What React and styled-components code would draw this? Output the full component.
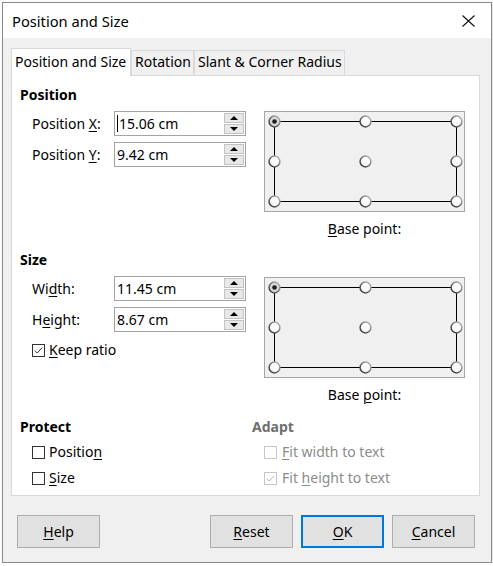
import React, { useId } from "react";
import styled, { createGlobalStyle } from "styled-components";

const Global = createGlobalStyle`
  html, body { margin: 0; padding: 0; background: #ffffff; }
  body {
    font-family: "Noto Sans", "Open Sans", "DejaVu Sans", sans-serif;
    font-size: 14px;
    color: #000;
  }
  u { text-decoration-thickness: 1px; text-underline-offset: 2px; }
`;

const Window = styled.div`
  margin: 2px 0 0 2px;
  width: 490px;
  height: 561px;
  box-sizing: border-box;
  border: 1px solid #8a8a8a;
  background: #f0f0f0;
  display: flex;
  flex-direction: column;
  box-shadow: 1px 1px 3px rgba(0, 0, 0, 0.18);
`;

const TitleBar = styled.div`
  height: 35px;
  background: #ffffff;
  display: flex;
  align-items: center;
  justify-content: space-between;
  padding: 0 16px 0 9px;
  font-size: 14.7px;
`;

const CloseIcon = () => (
  <svg width="13" height="12" viewBox="0 0 13 12">
    <path d="M0.5 0.5 L12.5 11.5 M12.5 0.5 L0.5 11.5" stroke="#111" strokeWidth="1.1" fill="none" />
  </svg>
);

const Body = styled.div`
  flex: 1;
  display: flex;
  flex-direction: column;
  padding: 10px 11px 0 8px;
`;

const TabBar = styled.div`
  display: flex;
  align-items: flex-end;
  height: 28px;
  margin-bottom: -1px;
  position: relative;
  z-index: 1;
`;

const Tab = styled.div`
  box-sizing: border-box;
  width: ${(p) => p.$w}px;
  height: ${(p) => (p.$active ? 28 : 25)}px;
  margin-bottom: ${(p) => (p.$active ? 0 : 1)}px;
  padding: ${(p) => (p.$active ? "3px" : "1px")} 3px 0 3px;
  background: ${(p) => (p.$active ? "#ffffff" : "#f0f0f0")};
  border: 1px solid #d9d9d9;
  border-bottom: none;
  line-height: 20px;
  white-space: nowrap;
`;

const Panel = styled.div`
  box-sizing: border-box;
  height: 421px;
  background: #ffffff;
  border: 1px solid #d9d9d9;
  padding: 9px 10px 0 8px;
  display: flex;
  flex-direction: column;
`;

const Heading = styled.div`
  font-weight: 700;
  height: 20px;
  line-height: 20px;
  margin-top: ${(p) => p.$mt || 0}px;
  color: ${(p) => (p.$disabled ? "#6e6e6e" : "#000")};
`;

const SectionBody = styled.div`
  display: flex;
  margin-top: 6px;
`;

const Fields = styled.div`
  width: 244px;
  box-sizing: border-box;
  padding-left: 12px;
  display: flex;
  flex-direction: column;
  gap: 6px;
`;

const FieldRow = styled.div`
  display: flex;
  align-items: center;
  height: 25px;
`;

const Label = styled.div`
  width: 82px;
  line-height: 20px;
`;

const SpinField = styled.div`
  box-sizing: border-box;
  width: 132px;
  height: 25px;
  border: 1px solid #a3a3a3;
  background: #fff;
  display: flex;
  align-items: stretch;
`;

const Value = styled.div`
  flex: 1;
  display: flex;
  align-items: center;
  padding-left: 2px;
  line-height: 20px;
`;

const Caret = styled.span`
  display: inline-block;
  width: 1px;
  height: 17px;
  background: #000;
  margin-right: 1px;
`;

const SpinCol = styled.div`
  width: 20px;
  display: flex;
  flex-direction: column;
  gap: 1px;
  margin: 1px 1px 1px 0;
`;

const SpinBtn = styled.div`
  flex: 1;
  box-sizing: border-box;
  background: #e8e8e8;
  border: 1px solid #c3c3c3;
  display: flex;
  align-items: center;
  justify-content: center;
`;

const Arrow = styled.span`
  width: 0;
  height: 0;
  border-left: 4px solid transparent;
  border-right: 4px solid transparent;
  ${(p) => (p.$up ? "border-bottom: 4px solid #000;" : "border-top: 4px solid #000;")}
`;

const BasePoint = styled.div`
  display: flex;
  flex-direction: column;
  align-items: center;
  width: 201px;
  margin-top: ${(p) => p.$mt || 0}px;
`;

const PointBox = styled.div`
  box-sizing: border-box;
  width: 201px;
  height: 101px;
  border: 1px solid #a6a6a6;
  background: #f0f0f0;
  display: flex;
`;

const PointLabel = styled.div`
  margin-top: 7px;
  line-height: 19px;
`;

const CheckRow = styled.div`
  display: flex;
  align-items: center;
  gap: ${(p) => p.$gap || 4}px;
  height: ${(p) => p.$h || 26}px;
  padding-left: ${(p) => (p.$flush ? 0 : 12)}px;
  color: ${(p) => (p.$disabled ? "#8c8c8c" : "#000")};
  line-height: 20px;
`;

const BottomGrid = styled.div`
  display: grid;
  grid-template-columns: 232px 1fr;
  margin-top: 13px;
`;

const Column = styled.div`
  display: flex;
  flex-direction: column;
`;

const RowList = styled.div`
  display: flex;
  flex-direction: column;
  margin-top: 2px;
`;

const ButtonBar = styled.div`
  display: flex;
  align-items: center;
  margin-top: 19px;
  padding: 0 5px 0 6px;
`;

const Spacer = styled.div`
  flex: 1;
`;

const ButtonGroup = styled.div`
  display: flex;
  gap: 8px;
`;

const Button = styled.div`
  box-sizing: border-box;
  width: 83px;
  height: 33px;
  background: #e1e1e1;
  border: ${(p) => (p.$default ? "2px solid #0078d7" : "1px solid #adadad")};
  display: flex;
  align-items: center;
  justify-content: center;
  line-height: 20px;
`;

const Checkbox = ({ checked, disabled }) => {
  const border = disabled ? "#c6c6c6" : "#333333";
  const mark = disabled ? "#b3b3b3" : "#333333";
  return (
    <svg width="13" height="13" viewBox="0 0 13 13">
      <rect x="0.5" y="0.5" width="12" height="12" fill="#fff" stroke={border} />
      {checked && (
        <path d="M2.8 6.6 L5.2 9 L10.2 3.6" stroke={mark} strokeWidth="1" fill="none" />
      )}
    </svg>
  );
};

const PointGrid = ({ selected = 0 }) => {
  const id = useId().replace(/:/g, "");
  const xs = [9.5, 100.5, 191.5];
  const ys = [9.5, 49.5, 89.5];
  const pts = [];
  ys.forEach((y) => xs.forEach((x) => pts.push([x, y])));
  return (
    <svg width="199" height="99" viewBox="0 0 199 99">
      <defs>
        <linearGradient id={`s${id}`} x1="0" y1="1" x2="1" y2="0">
          <stop offset="0" stopColor="#2e2e2e" />
          <stop offset="0.5" stopColor="#6e6e6e" />
          <stop offset="1" stopColor="#c4c4c4" />
        </linearGradient>
        <radialGradient id={`f${id}`} cx="0.6" cy="0.4" r="0.7">
          <stop offset="0" stopColor="#ffffff" />
          <stop offset="0.7" stopColor="#f8f8f8" />
          <stop offset="1" stopColor="#dcdcdc" />
        </radialGradient>
      </defs>
      <rect x="9.5" y="9.5" width="182" height="80" fill="none" stroke="#000" strokeWidth="1" />
      {pts.map(([x, y], i) => (
        <g key={i}>
          <circle
            cx={x}
            cy={y}
            r="5.4"
            fill={i === selected ? "#d6d6d6" : `url(#f${id})`}
            stroke={`url(#s${id})`}
            strokeWidth="1.5"
          />
          {i === selected && <circle cx={x} cy={y} r="2.3" fill="#1e1e1e" />}
        </g>
      ))}
    </svg>
  );
};

const SpinInput = ({ label, value, caret }) => (
  <FieldRow>
    <Label>{label}</Label>
    <SpinField>
      <Value>
        {caret && <Caret />}
        {value}
      </Value>
      <SpinCol>
        <SpinBtn>
          <Arrow $up />
        </SpinBtn>
        <SpinBtn>
          <Arrow />
        </SpinBtn>
      </SpinCol>
    </SpinField>
  </FieldRow>
);

export default function App() {
  return (
    <>
      <Global />
      <Window>
        <TitleBar>
          <span>Position and Size</span>
          <CloseIcon />
        </TitleBar>
        <Body>
          <TabBar>
            <Tab $active $w={120}>Position and Size</Tab>
            <Tab $w={63}>Rotation</Tab>
            <Tab $w={151}>Slant &amp; Corner Radius</Tab>
          </TabBar>
          <Panel>
            <Heading>Position</Heading>
            <SectionBody>
              <Fields>
                <SpinInput label={<>Position <u>X</u>:</>} value="15.06 cm" caret />
                <SpinInput label={<>Position <u>Y</u>:</>} value="9.42 cm" />
              </Fields>
              <BasePoint>
                <PointBox>
                  <PointGrid selected={0} />
                </PointBox>
                <PointLabel>
                  <u>B</u>ase point:
                </PointLabel>
              </BasePoint>
            </SectionBody>

            <Heading $mt={12}>Size</Heading>
            <SectionBody>
              <Fields>
                <SpinInput label={<>Wi<u>d</u>th:</>} value="11.45 cm" />
                <SpinInput label={<>H<u>e</u>ight:</>} value="8.67 cm" />
                <CheckRow $h={24} $flush>
                  <Checkbox checked />
                  <span>
                    <u>K</u>eep ratio
                  </span>
                </CheckRow>
              </Fields>
              <BasePoint $mt={1}>
                <PointBox>
                  <PointGrid selected={0} />
                </PointBox>
                <PointLabel>
                  Base <u>p</u>oint:
                </PointLabel>
              </BasePoint>
            </SectionBody>

            <BottomGrid>
              <Column>
                <Heading>Protect</Heading>
                <RowList>
                  <CheckRow>
                    <Checkbox />
                    <span>
                      Positio<u>n</u>
                    </span>
                  </CheckRow>
                  <CheckRow>
                    <Checkbox />
                    <span>
                      <u>S</u>ize
                    </span>
                  </CheckRow>
                </RowList>
              </Column>
              <Column>
                <Heading $disabled>Adapt</Heading>
                <RowList>
                  <CheckRow $disabled $gap={5}>
                    <Checkbox disabled />
                    <span>
                      <u>F</u>it width to text
                    </span>
                  </CheckRow>
                  <CheckRow $disabled $gap={5}>
                    <Checkbox disabled checked />
                    <span>
                      Fit <u>h</u>eight to text
                    </span>
                  </CheckRow>
                </RowList>
              </Column>
            </BottomGrid>
          </Panel>
          <ButtonBar>
            <Button>
              <span>
                <u>H</u>elp
              </span>
            </Button>
            <Spacer />
            <ButtonGroup>
              <Button>
                <span>
                  <u>R</u>eset
                </span>
              </Button>
              <Button $default>
                <span>
                  <u>O</u>K
                </span>
              </Button>
              <Button>
                <span>
                  <u>C</u>ancel
                </span>
              </Button>
            </ButtonGroup>
          </ButtonBar>
        </Body>
      </Window>
    </>
  );
}
